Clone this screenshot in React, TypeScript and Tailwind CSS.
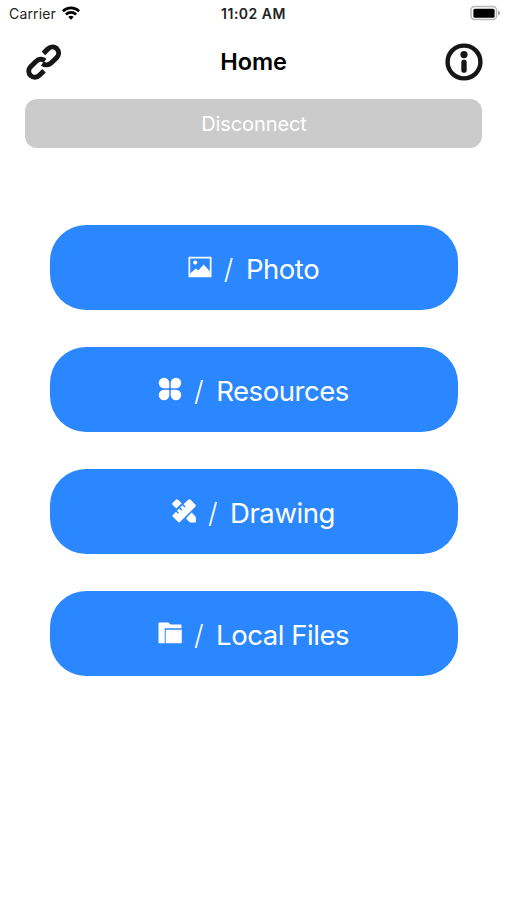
import type { ReactNode } from "react";

const actions: { label: string; text: string; icon: ReactNode }[] = [
  {
    label: "Photo",
    text: "tracking-[-0.45px]",
    icon: (
      <>
        <path
          fillRule="evenodd"
          d="M1 1.7h22a.5.5 0 0 1 .5.5v19.6a.5.5 0 0 1-.5.5H1a.5.5 0 0 1-.5-.5V2.2a.5.5 0 0 1 .5-.5Zm1.2 1.9v16.8h19.6V3.6H2.2Z"
        />
        <circle cx="7.2" cy="7.6" r="2.1" />
        <path d="M2.2 20.9v-2.5l5.6-4.8 2.6 1.8 5.2-6 6.2 6.8v5Z" />
      </>
    ),
  },
  {
    label: "Resources",
    text: "tracking-[-0.45px]",
    icon: (
      <>
        <path d="M6 .8a5.3 5.3 0 0 1 5.3 5.3v4.2a1 1 0 0 1-1 1H6A5.25 5.25 0 0 1 6 .8Z" />
        <path d="M18 .8a5.3 5.3 0 0 0-5.3 5.3v4.2a1 1 0 0 0 1 1H18A5.25 5.25 0 0 0 18 .8Z" />
        <path d="M6 23.2a5.3 5.3 0 0 0 5.3-5.3v-4.2a1 1 0 0 0-1-1H6a5.25 5.25 0 0 0 0 10.5Z" />
        <path d="M18 23.2a5.3 5.3 0 0 1-5.3-5.3v-4.2a1 1 0 0 1 1-1H18a5.25 5.25 0 0 1 0 10.5Z" />
      </>
    ),
  },
  {
    label: "Drawing",
    text: "tracking-[-0.4px]",
    icon: (
      <>
        <path d="M16.3.7a1.6 1.6 0 0 1 2.2 0l4.8 4.8a1.6 1.6 0 0 1 0 2.2L8.2 22.8a1.6 1.6 0 0 1-2.2 0L1 17.9a1.6 1.6 0 0 1 0-2.2l3-3 2 2 1-1-2-2 2.2-2.2 2.2 2.2 1-1-2.2-2.2 2.2-2.2 2.2 2.2 1-1-2.2-2.2Z" />
        <path d="M3.7.9a1.8 1.8 0 0 1 2.6 0l3.4 3.4L4.4 9.6.9 6.2a1.8 1.8 0 0 1 0-2.6Z" />
        <path d="m19.6 13.6 3.6 3.6c.5.5.7 1 .7 1.7v3.5a1.2 1.2 0 0 1-1.2 1.2h-3.5c-.7 0-1.2-.2-1.7-.7l-3.5-3.5Z" />
      </>
    ),
  },
  {
    label: "Local Files",
    text: "tracking-[-0.45px]",
    icon: (
      <>
        <path d="M1.3 1.4h8.9l2.4 2.1h10.1a.8.8 0 0 1 .8.8v2.9H6.7v15.1H1.3a.8.8 0 0 1-.8-.8V2.2a.8.8 0 0 1 .8-.8Z" />
        <path d="M8.5 8.7h15.3v12.8a.8.8 0 0 1-.8.8H7.7V9.5a.8.8 0 0 1 .8-.8Z" />
      </>
    ),
  },
];

function StatusBar() {
  return (
    <div className="grid h-7 grid-cols-3 items-center pl-[9px] pr-[6px] text-[#222]">
      <div className="flex items-center gap-[6px]">
        <span className="text-[14px] leading-5 tracking-[0.15px]">Carrier</span>
        <svg viewBox="0 0 18 14" className="mb-[2px] h-[14px] w-[18px]" fill="none" stroke="#000" strokeWidth="2.6">
          <path d="M.9 5.2a11.6 11.6 0 0 1 16.2 0" />
          <path d="M3.9 8.5a7.3 7.3 0 0 1 10.2 0" />
          <path d="M9 13.8 6.3 11.1a3.9 3.9 0 0 1 5.4 0Z" fill="#000" stroke="none" />
        </svg>
      </div>
      <span className="-ml-[3px] text-center text-[14px] font-semibold leading-5 tracking-[0.5px]">11:02 AM</span>
      <svg viewBox="0 0 31 16" className="mb-[2px] h-4 w-[31px] justify-self-end">
        <rect x="1" y="1.5" width="25.5" height="13" rx="3.5" fill="#fff" stroke="#b9b9b9" strokeWidth="1.5" />
        <rect x="3.4" y="3.7" width="21.2" height="9" rx="1.5" fill="#000" />
        <path d="M28.2 5.8v4.6c1-.3 1.8-1.2 1.8-2.3s-.8-2-1.8-2.3Z" fill="#999" />
      </svg>
    </div>
  );
}

function Header() {
  return (
    <header className="flex h-[68px] items-center justify-between pl-[26px] pr-6">
      <svg viewBox="0 0 36 36" className="h-9 w-9" fill="none" stroke="#161616" strokeWidth="5">
        <path d="M17.4 9.4 22 4.9c2.5-2.5 6.4-2.4 8.8-.2 2.3 2.3 2.4 6.2 0 8.7l-5.4 5.4c-2.5 2.4-6.2 2.8-9 .7" />
        <path d="M18 26.8 13.4 31.3c-2.5 2.5-6.4 2.4-8.8.2-2.3-2.3-2.4-6.2 0-8.7L10 17.4c2.5-2.4 6.2-2.8 9-.7" />
      </svg>
      <h1 className="text-[23.5px] font-semibold leading-8 tracking-[-0.1px] text-black">Home</h1>
      <svg viewBox="0 0 38 38" className="h-[38px] w-[38px]">
        <circle cx="19" cy="19" r="16.4" fill="none" stroke="#161616" strokeWidth="4.4" />
        <circle cx="19" cy="11.6" r="3.6" fill="#161616" />
        <rect x="16.3" y="16.8" width="5.4" height="13" rx="2.2" fill="#161616" />
      </svg>
    </header>
  );
}

export default function App() {
  return (
    <div className="h-[900px] w-[507px] overflow-hidden bg-white font-['Inter',sans-serif]">
      <StatusBar />
      <Header />
      <div className="px-[25px] pt-[2.5px]">
        <button className="flex h-[49px] w-full items-center justify-center rounded-xl bg-[#cbcbcb] pl-px pt-[2px] text-[20px] tracking-[-0.1px] text-white">
          Disconnect
        </button>
      </div>
      <main className="mt-[77px] flex flex-col gap-[36.5px] px-[50px]">
        {actions.map((action) => (
          <button
            key={action.label}
            className="flex h-[85.5px] w-[408px] items-center justify-center rounded-[36px] bg-[#2a87ff] pr-px pt-[3px] text-[27.5px] leading-9 text-white"
          >
            <svg viewBox="0 0 24 24" className="mb-[4px] mr-[12px] h-6 w-6" fill="currentColor">
              {action.icon}
            </svg>
            <span className="mr-[12.5px] font-light">/</span>
            <span className={action.text}>{action.label}</span>
          </button>
        ))}
      </main>
    </div>
  );
}
